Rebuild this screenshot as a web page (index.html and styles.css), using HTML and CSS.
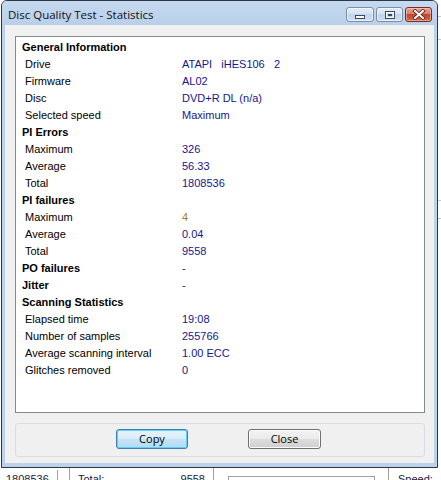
FILE: index.html
```html
<!DOCTYPE html>
<html>
<head>
<meta charset="utf-8">
<link rel="stylesheet" href="styles.css">
</head>
<body>
<div class="desk">
  <div class="window">
    <div class="titlebar">
      <span class="title">Disc Quality Test - Statistics</span>
      <div class="caps">
        <span class="cap">
          <svg width="12" height="6" viewBox="0 0 12 6"><rect x="1.5" y="1.5" width="9" height="3" fill="#fff" stroke="#3b4a5e" stroke-width="1"/></svg>
        </span>
        <span class="cap">
          <svg width="12" height="10" viewBox="0 0 12 10"><rect x="1.5" y="1.5" width="9" height="7" fill="none" stroke="#3b4a5e" stroke-width="1"/><rect x="2.5" y="2.5" width="7" height="5" fill="none" stroke="#fff" stroke-width="1"/><rect x="4" y="4" width="4" height="2" fill="#3b4a5e"/></svg>
        </span>
        <span class="cap close">
          <svg width="14" height="11" viewBox="0 0 14 11"><path d="M3 2 L11 9 M11 2 L3 9" stroke="#5a2015" stroke-width="3.6" stroke-linecap="square"/><path d="M3 2 L11 9 M11 2 L3 9" stroke="#fff" stroke-width="2" stroke-linecap="square"/></svg>
        </span>
      </div>
    </div>
    <div class="frame">
      <div class="client">
        <div class="list">
          <div class="row head"><span class="lab">General Information</span></div>
          <div class="row"><span class="lab">Drive</span><span class="val">ATAPI   iHES106   2</span></div>
          <div class="row"><span class="lab">Firmware</span><span class="val">AL02</span></div>
          <div class="row"><span class="lab">Disc</span><span class="val">DVD+R DL (n/a)</span></div>
          <div class="row"><span class="lab">Selected speed</span><span class="val">Maximum</span></div>
          <div class="row head"><span class="lab">PI Errors</span></div>
          <div class="row"><span class="lab">Maximum</span><span class="val">326</span></div>
          <div class="row"><span class="lab">Average</span><span class="val">56.33</span></div>
          <div class="row"><span class="lab">Total</span><span class="val">1808536</span></div>
          <div class="row head"><span class="lab">PI failures</span></div>
          <div class="row"><span class="lab">Maximum</span><span class="val warn">4</span></div>
          <div class="row"><span class="lab">Average</span><span class="val">0.04</span></div>
          <div class="row"><span class="lab">Total</span><span class="val">9558</span></div>
          <div class="row head"><span class="lab">PO failures</span><span class="val">-</span></div>
          <div class="row head"><span class="lab">Jitter</span><span class="val">-</span></div>
          <div class="row head"><span class="lab">Scanning Statistics</span></div>
          <div class="row"><span class="lab">Elapsed time</span><span class="val">19:08</span></div>
          <div class="row"><span class="lab">Number of samples</span><span class="val">255766</span></div>
          <div class="row"><span class="lab">Average scanning interval</span><span class="val">1.00 ECC</span></div>
          <div class="row"><span class="lab">Glitches removed</span><span class="val">0</span></div>
        </div>
        <div class="btnbox">
          <button class="btn default">Copy</button>
          <button class="btn">Close</button>
        </div>
      </div>
    </div>
  </div>
  <div class="side">
    <div class="sl l1"></div>
    <div class="sl l2"></div>
    <div class="sl l3"></div>
    <div class="sl l4"></div>
  </div>
</div>
<div class="under">
  <div class="uc c1">1808536</div>
  <div class="uc c2"></div>
  <div class="uc c3"><span>Total:</span><span>9558</span></div>
  <div class="uc c4"><div class="ubox"></div></div>
  <div class="uc c5">Speed:</div>
</div>
</body>
</html>
```
FILE: styles.css
```css
* { box-sizing: border-box; }
html, body { margin: 0; padding: 0; background: #fff; }
body { width: 441px; height: 480px; overflow: hidden; font-family: "Liberation Sans", Arial, sans-serif; }

.desk { display: flex; height: 468px; }

.window {
  width: 437px;
  height: 468px;
  margin-left: 1px;
  border: 1px solid #2e3843;
  border-radius: 6px 6px 0 0;
  background: #bcd1ea;
  display: flex;
  flex-direction: column;
  overflow: hidden;
}

.titlebar {
  height: 24px;
  flex: none;
  display: flex;
  align-items: flex-start;
  justify-content: space-between;
  padding: 0 5px 0 6px;
  background: linear-gradient(#c5d9f0, #b9cfe9);
}
.title {
  font-family: "Open Sans", "Noto Sans", sans-serif;
  font-size: 11.5px;
  line-height: 16px;
  padding-top: 6px;
  color: #111;
}
.caps { display: flex; gap: 2px; padding-top: 6px; }
.cap {
  width: 27px;
  height: 15px;
  border: 1px solid #7a8ea8;
  border-radius: 3px;
  background: linear-gradient(#e4edf7 0%, #d3e1f1 50%, #c2d4ea 50%, #cfdef0 100%);
  box-shadow: inset 0 0 0 1px rgba(255,255,255,0.55);
  display: flex;
  align-items: center;
  justify-content: center;
}
.cap:first-child { width: 28px; }
.cap:first-child svg { margin-top: 4px; }
.close {
  border-color: #7e2a1d;
  background: linear-gradient(#e3a495 0%, #d7806b 45%, #c2452c 50%, #cf6a4f 100%);
  box-shadow: inset 0 0 0 1px rgba(255,220,210,0.5);
}

.frame { flex: 1; padding: 0 3px 4px 3px; display: flex; }
.client {
  flex: 1;
  background: #f0f0f0;
  padding: 11px 9px 6px 10px;
  display: flex;
  flex-direction: column;
  gap: 10px;
}

.list {
  height: 377px;
  flex: none;
  background: #fff;
  border: 1px solid #828790;
  padding-top: 2px;
  font-size: 11px;
  color: #000;
}
.row { display: flex; height: 17px; line-height: 17px; }
.lab { width: 166px; padding-left: 9px; flex: none; white-space: nowrap; }
.head .lab { font-weight: bold; padding-left: 6px; }
.val { color: #16168e; white-space: pre; }
.head .val { font-weight: normal; color: #16168e; }
.warn { color: #9c8420; }

.btnbox {
  height: 34px;
  flex: none;
  border: 1px solid #d9dde2;
  border-radius: 3px;
  padding: 5px 0 0 100px;
  display: flex;
  align-items: flex-start;
  gap: 60px;
}
.btn {
  width: 72px;
  height: 20px;
  margin: 0;
  padding: 0;
  font-family: "Open Sans", "Noto Sans", sans-serif;
  font-size: 11px;
  line-height: 18px;
  color: #000;
  border: 1px solid #707070;
  border-radius: 3px;
  background: linear-gradient(#f2f2f2 0%, #ebebeb 50%, #dddddd 50%, #cfcfcf 100%);
  box-shadow: inset 0 0 0 1px #fbfbfb;
}
.btn + .btn { width: 73px; }
.default {
  border-color: #3c7fb1;
  background: linear-gradient(#e6f3fb 0%, #d8edf9 50%, #c4e3f5 50%, #b6dbf1 100%);
  box-shadow: inset 0 0 0 1px #5fd0f6;
}

.side { width: 3px; }
.sl { height: 1px; background: #c8c8c8; margin-top: 16px; }
.l2 { margin-top: 22px; }
.l3 { margin-top: 160px; }
.l4 { margin-top: 17px; }

.under {
  height: 12px;
  display: flex;
  overflow: hidden;
  font-size: 11px;
  line-height: 13px;
  color: #1a1a3a;
}
.uc { height: 12px; padding-top: 5px; white-space: nowrap; }
.c1 { width: 57px; padding-left: 6px; }
.c2 { width: 12px; border-left: 1px solid #a0a0a0; margin-top: 2px; }
.c3 { width: 144px; border-left: 1px solid #a0a0a0; padding-left: 8px; padding-right: 8px; display: flex; justify-content: space-between; }
.c4 { width: 175px; border-left: 1px solid #a0a0a0; padding: 8px 0 0 14px; }
.ubox { width: 147px; height: 6px; border: 1px solid #a0a0a0; border-bottom: none; }
.c5 { flex: 1; border-left: 1px solid #a0a0a0; padding-left: 9px; }
```
